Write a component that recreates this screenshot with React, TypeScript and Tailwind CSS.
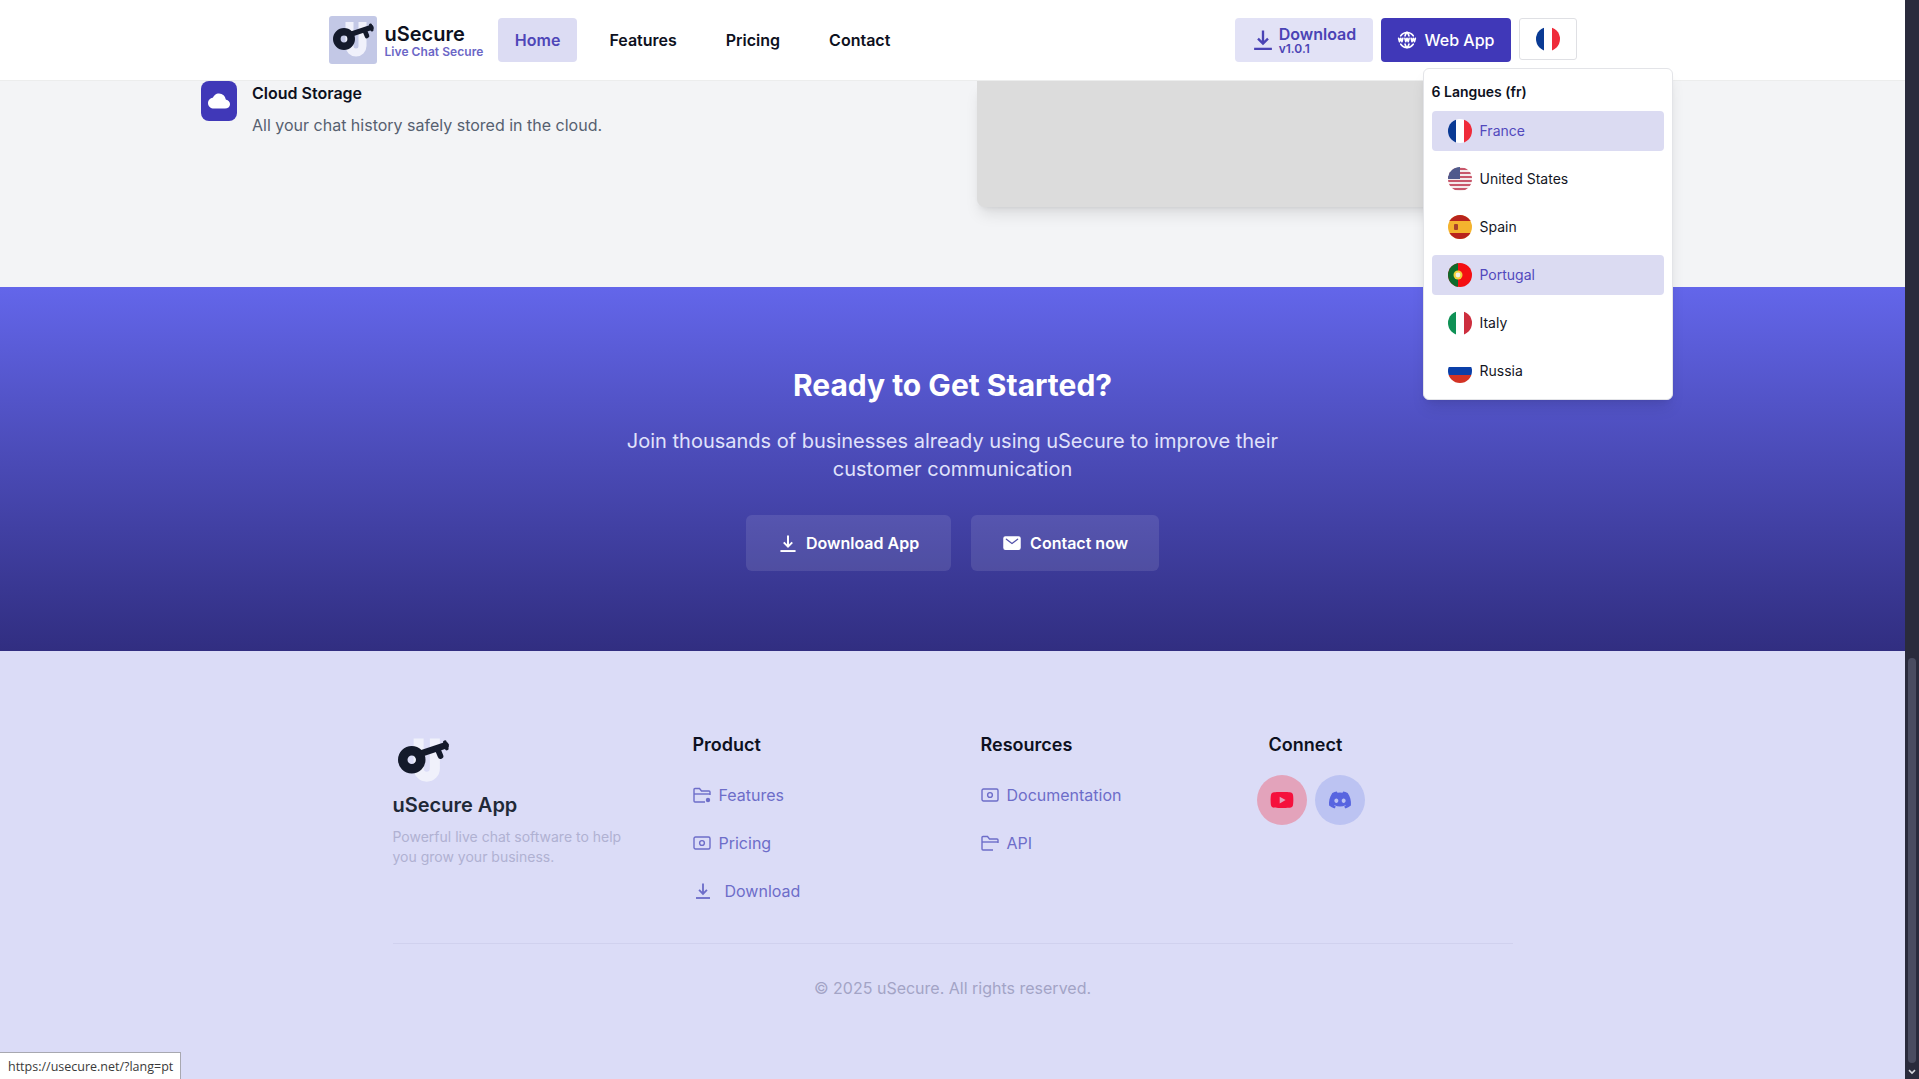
import React from 'react';
import { FaYoutube, FaDiscord } from 'react-icons/fa';
import { IoCloud, IoMail } from 'react-icons/io5';
import { TbWorldWww } from 'react-icons/tb';

const LogoMark: React.FC<{ className?: string }> = ({ className }) => (
  <svg viewBox="0 0 48 48" className={className}>
    <path d="M20.5 6v24a6.5 6.5 0 0 0 13 0V6" fill="none" stroke="#f0f1fb" strokeWidth="8" />
    <circle cx="15" cy="23" r="7.2" fill="none" stroke="#141a2b" strokeWidth="7.6" />
    <path d="M21 18.5L42 11.5" fill="none" stroke="#141a2b" strokeWidth="5.4" strokeLinecap="round" />
    <path d="M35.5 14l2.5 6" fill="none" stroke="#141a2b" strokeWidth="4.6" strokeLinecap="round" />
    <path d="M41.5 9l1.5 5" fill="none" stroke="#141a2b" strokeWidth="3" strokeLinecap="round" />
  </svg>
);

const DownloadIcon: React.FC<{ className?: string }> = ({ className }) => (
  <svg viewBox="0 0 16 18" fill="none" stroke="currentColor" strokeWidth="2.1" className={className}>
    <path d="M8 0.5v11.5M3.5 7.8L8 12.3l4.5-4.5" />
    <path d="M0 17h16" />
  </svg>
);

const FolderIcon: React.FC<{ dot?: boolean }> = ({ dot }) => (
  <svg viewBox="0 0 18 16" fill="none" stroke="currentColor" strokeWidth="1.4" className="w-[18px] h-4 shrink-0">
    <path d="M1 14V2.5A1 1 0 0 1 2 1.5h4.5l2 2.5H16a1 1 0 0 1 1 1V8" />
    <path d="M1 7h16" />
    <path d="M1 14a1 1 0 0 0 1 1h10" />
    {dot && <circle cx="15" cy="13" r="2.2" fill="currentColor" stroke="none" />}
  </svg>
);

const CashIcon = () => (
  <svg viewBox="0 0 18 14" fill="none" stroke="currentColor" strokeWidth="1.4" className="w-[18px] h-[14px] shrink-0">
    <rect x="1" y="1" width="16" height="12" rx="1.5" />
    <circle cx="9" cy="7" r="2.4" />
  </svg>
);

const FlagFR = () => (
  <>
    <rect width="8" height="24" fill="#0a3a94" />
    <rect x="8" width="8" height="24" fill="#fff" />
    <rect x="16" width="8" height="24" fill="#ef2b3a" />
  </>
);

const FlagUS = () => (
  <>
    <rect width="24" height="24" fill="#f4e9ea" />
    {[2, 6, 10, 14, 18, 22].map((y) => (
      <rect key={y} y={y - 1} width="24" height="2" fill="#c8566a" />
    ))}
    <rect width="12" height="12" fill="#4f5a8c" />
  </>
);

const FlagES = () => (
  <>
    <rect width="24" height="24" fill="#f4b32e" />
    <rect width="24" height="6" fill="#b8231d" />
    <rect y="18" width="24" height="6" fill="#b8231d" />
    <rect x="6" y="9" width="4" height="6" rx="1" fill="#a8432a" />
  </>
);

const FlagPT = () => (
  <>
    <rect width="24" height="24" fill="#f40f12" />
    <rect width="10" height="24" fill="#0e6b2c" />
    <circle cx="10" cy="12" r="4.5" fill="#f3d23c" />
    <circle cx="10" cy="12" r="2.4" fill="#f3efe6" />
  </>
);

const FlagIT = () => (
  <>
    <rect width="8" height="24" fill="#0f9155" />
    <rect x="8" width="8" height="24" fill="#fff" />
    <rect x="16" width="8" height="24" fill="#cd2e3e" />
  </>
);

const FlagRU = () => (
  <>
    <rect width="24" height="8" fill="#fff" />
    <rect y="8" width="24" height="8" fill="#0b3fa8" />
    <rect y="16" width="24" height="8" fill="#d33324" />
  </>
);

const Flag: React.FC<{ children: React.ReactNode }> = ({ children }) => (
  <svg viewBox="0 0 24 24" className="w-6 h-6 rounded-full shrink-0">
    {children}
  </svg>
);

const languages = [
  { name: 'France', flag: <FlagFR />, active: true },
  { name: 'United States', flag: <FlagUS /> },
  { name: 'Spain', flag: <FlagES /> },
  { name: 'Portugal', flag: <FlagPT />, active: true },
  { name: 'Italy', flag: <FlagIT /> },
  { name: 'Russia', flag: <FlagRU /> },
];

const navItems = ['Features', 'Pricing', 'Contact'];

const Header = () => (
  <header className="relative z-10 h-[81px] bg-white border-b border-[#eceded] shrink-0">
    <div className="max-w-7xl mx-auto px-4 h-full flex items-center justify-between">
      <div className="flex items-center gap-[15px]">
        <div className="flex items-center gap-2">
          <div className="w-12 h-12 bg-[#c3c8e6] rounded-[3px]">
            <LogoMark className="w-12 h-12" />
          </div>
          <div className="flex flex-col">
            <span className="text-xl leading-[22px] font-semibold text-[#0d1020]">uSecure</span>
            <span className="text-xs leading-[13px] font-semibold text-[#6b66c6] tracking-[0.05px]">Live Chat Secure</span>
          </div>
        </div>
        <nav className="flex items-center gap-4">
          <a className="h-11 px-[16.5px] flex items-center rounded bg-[#dcdcf3] text-[#4f46b8] font-semibold">Home</a>
          {navItems.map((item) => (
            <a key={item} className="h-11 px-[16.5px] flex items-center font-semibold text-[#0d1020]">
              {item}
            </a>
          ))}
        </nav>
      </div>

      <div className="flex items-center gap-2">
        <a className="w-[138px] h-11 pl-[3px] rounded bg-[#e2e2f6] text-[#4a43b5] flex items-center justify-center gap-[7px]">
          <DownloadIcon className="w-[18px] h-5" />
          <span className="flex flex-col">
            <span className="font-semibold leading-[17px]">Download</span>
            <span className="text-xs font-semibold leading-[11px]">v1.0.1</span>
          </span>
        </a>
        <a className="w-[130px] h-11 rounded bg-[#4038b8] text-white flex items-center justify-center gap-2 font-medium">
          <TbWorldWww className="w-5 h-5" />
          Web App
        </a>
        <div className="relative">
          <button className="w-[58px] h-[42px] mb-[2px] rounded-[3px] bg-white border border-[#dfe0e4] flex items-center justify-center">
            <Flag><FlagFR /></Flag>
          </button>
          <div className="absolute top-[50px] left-1/2 -translate-x-1/2 w-[250px] h-[332px] bg-white border border-[#e3e4e8] rounded-md shadow-lg px-2 pt-[13px]">
            <div className="text-sm leading-5 font-semibold text-[#0d1020] mb-[9px]">6 Langues (fr)</div>
            <ul className="flex flex-col gap-2">
              {languages.map((lang) =>
                <li
                  key={lang.name}
                  className={
                    lang.active
                      ? 'h-10 px-4 flex items-center gap-2 rounded bg-[#dbdbf2] text-sm text-[#5249bd]'
                      : 'h-10 px-4 flex items-center gap-2 rounded text-sm text-[#14161f]'
                  }
                >
                  <Flag>{lang.flag}</Flag>
                  {lang.name}
                </li>
              )}
            </ul>
          </div>
        </div>
      </div>
    </div>
  </header>
);

const FeatureTail = () => (
  <section className="h-[206px] bg-[#f3f4f6] shrink-0 pl-[201px] pr-[246px] flex justify-between items-start">
    <div className="flex gap-[15px]">
      <div className="w-9 h-10 rounded-lg bg-[#4038b8] flex items-center justify-center text-white">
        <IoCloud className="w-[22px] h-[22px]" />
      </div>
      <div>
        <h3 className="font-semibold leading-6 text-[#0d1020]">Cloud Storage</h3>
        <p className="mt-2 leading-6 text-[#566070]">All your chat history safely stored in the cloud.</p>
      </div>
    </div>
    <div className="w-[682px] h-[126px] bg-[#dcdcdc] rounded-b-lg shadow-lg" />
  </section>
);

const Cta = () => (
  <section className="h-[364px] shrink-0 pt-20 bg-gradient-to-b from-[#6366ea] to-[#312e81] text-center">
    <h2 className="text-3xl leading-9 font-bold text-white">Ready to Get Started?</h2>
    <p className="mt-6 mx-auto max-w-2xl text-xl leading-7 text-[#e0e2fb]">
      Join thousands of businesses already using uSecure to improve their customer communication
    </p>
    <div className="mt-8 flex justify-center gap-5">
      <a className="h-14 px-8 flex items-center gap-2 rounded-md bg-white/10 text-white font-semibold">
        <DownloadIcon className="w-5 h-[17px]" />
        Download App
      </a>
      <a className="h-14 px-[31px] flex items-center gap-2 rounded-md bg-white/10 text-white font-semibold">
        <IoMail className="w-5 h-5" />
        Contact now
      </a>
    </div>
  </section>
);

const FooterLink: React.FC<{ icon: React.ReactNode; label: string; wide?: boolean }> = ({ icon, label, wide }) => (
  <li className={wide ? 'flex items-center gap-[15px] h-6 pl-[3px] text-[#6d6dc9]' : 'flex items-center gap-2 h-6 text-[#6d6dc9]'}>
    {icon}
    {label}
  </li>
);

const Footer = () => (
  <footer className="flex-1 bg-[#dbdcf7] pt-20">
    <div className="max-w-6xl mx-auto px-4">
      <div className="grid grid-cols-[268px_256px_256px_auto] gap-8">
        <div>
          <LogoMark className="w-[60px] h-[60px]" />
          <h3 className="text-xl leading-7 font-semibold text-[#1f2937]">uSecure App</h3>
          <p className="mt-2 max-w-[235px] text-sm leading-5 text-[#b0b1d2]">
            Powerful live chat software to help you grow your business.
          </p>
        </div>
        <div>
          <h4 className="text-lg leading-7 font-semibold text-[#0d1020] mb-6">Product</h4>
          <ul className="flex flex-col gap-6">
            <FooterLink icon={<FolderIcon dot />} label="Features" />
            <FooterLink icon={<CashIcon />} label="Pricing" />
            <FooterLink icon={<DownloadIcon className="w-[14px] h-4 shrink-0" />} label="Download" wide />
          </ul>
        </div>
        <div>
          <h4 className="text-lg leading-7 font-semibold text-[#0d1020] mb-6">Resources</h4>
          <ul className="flex flex-col gap-6">
            <FooterLink icon={<CashIcon />} label="Documentation" />
            <FooterLink icon={<FolderIcon />} label="API" />
          </ul>
        </div>
        <div>
          <h4 className="text-lg leading-7 font-semibold text-[#0d1020] mb-4">Connect</h4>
          <div className="flex gap-2 -ml-[11.5px]">
            <a className="w-[50px] h-[50px] rounded-full bg-[#e3a3bb] flex items-center justify-center text-[#f5103c]">
              <FaYoutube className="w-6 h-6" />
            </a>
            <a className="w-[50px] h-[50px] rounded-full bg-[#bcc3f2] flex items-center justify-center text-[#5865e0]">
              <FaDiscord className="w-6 h-6" />
            </a>
          </div>
        </div>
      </div>
      <div className="mt-10 pt-8 border-t border-[#d0d1ee] text-center leading-6 text-[#a3a4c6]">
        © 2025 uSecure. All rights reserved.
      </div>
    </div>
  </footer>
);

const Scrollbar = () => (
  <div className="w-[14px] bg-[#2a2b3c] shrink-0 flex flex-col items-center">
    <div className="mt-[658px] w-2 h-[405px] rounded-full bg-[#4a4c60]" />
    <svg viewBox="0 0 10 8" className="mt-[6px] w-2 h-[6px]" fill="none" stroke="#d5d6dc" strokeWidth="2">
      <path d="M1 1.5l4 4 4-4" />
    </svg>
  </div>
);

const App = () => (
  <div className="h-screen overflow-hidden flex font-['Inter',sans-serif]">
    <main className="relative flex-1 min-w-0 flex flex-col">
      <Header />
      <FeatureTail />
      <Cta />
      <Footer />
      <div className="absolute left-0 bottom-0 h-[27px] w-[181px] bg-white border border-l-0 border-b-0 border-[#a8a8b0] pl-2 pt-[2px] flex items-center text-[12.5px] text-[#3a3a3a] font-['Open_Sans',sans-serif]">
        https://usecure.net/?lang=pt
      </div>
    </main>
    <Scrollbar />
  </div>
);

export default App;
